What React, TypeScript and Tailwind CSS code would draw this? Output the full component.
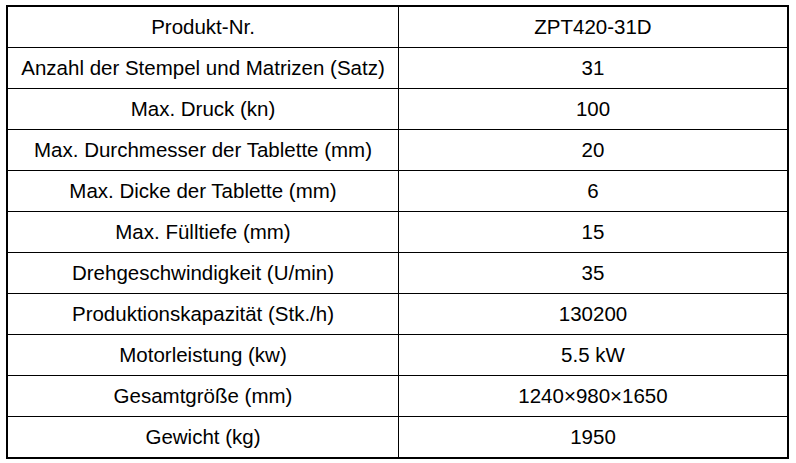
const rows: [string, string][] = [
  ['Produkt-Nr.', 'ZPT420-31D'],
  ['Anzahl der Stempel und Matrizen (Satz)', '31'],
  ['Max. Druck (kn)', '100'],
  ['Max. Durchmesser der Tablette (mm)', '20'],
  ['Max. Dicke der Tablette (mm)', '6'],
  ['Max. Fülltiefe (mm)', '15'],
  ['Drehgeschwindigkeit (U/min)', '35'],
  ['Produktionskapazität (Stk./h)', '130200'],
  ['Motorleistung (kw)', '5.5 kW'],
  ['Gesamtgröße (mm)', '1240×980×1650'],
  ['Gewicht (kg)', '1950'],
];

export default function App() {
  return (
    <div className="w-[796px] h-[463px] bg-white pt-[5px] pl-[6px]" style={{ fontFamily: '"Liberation Sans", Arial, sans-serif' }}>
      <div className="w-[783px] border-2 border-black text-black text-[20.5px]">
        {rows.map(([label, value], i) => (
          <div
            key={label}
            className={`flex ${i < rows.length - 1 ? 'h-[41px] border-b border-black' : 'h-[40px]'}`}
          >
            <div className="w-[391px] border-r border-black flex items-center justify-center">{label}</div>
            <div className="flex-1 flex items-center justify-center">{value}</div>
          </div>
        ))}
      </div>
    </div>
  );
}
